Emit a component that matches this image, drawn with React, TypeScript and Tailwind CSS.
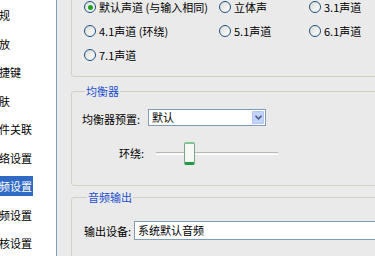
import React from 'react';

const font = { fontFamily: '"Noto Sans CJK SC", "Liberation Sans", sans-serif' };

const navItems = ['常规', '播放', '快捷键', '皮肤', '文件关联', '网络设置', '音频设置', '视频设置', '内核设置'];

const Radio = ({ label, checked = false }: { label: string; checked?: boolean }) => (
    <div className="flex items-center h-[24px] gap-[3px]">
        <span className="flex items-center justify-center w-[12px] h-[12px] rounded-full border border-[#1c5180] bg-gradient-to-br from-[#dcdcd6] to-white shrink-0">
            {checked && <span className="w-[5px] h-[5px] rounded-full bg-[#21a121]" />}
        </span>
        <span className="whitespace-nowrap">{label}</span>
    </div>
);

const GroupBox = ({ title, className, children }: { title: string; className?: string; children: React.ReactNode }) => (
    <fieldset className={`w-[340px] shrink-0 border border-[#d0d0c6] rounded-[3px] ${className ?? ''}`}>
        <legend className="ml-[3px] px-[1px] text-[#1f4fcf] leading-[13px]">{title}</legend>
        {children}
    </fieldset>
);

const App = () => {
    return (
        <div className="flex w-[375px] h-[256px] overflow-hidden bg-[#eaeaea] text-[11px] text-black" style={font}>
            {/* tree on the left, scrolled so the first character is hidden */}
            <div className="w-[57px] shrink-0 bg-white border-r border-[#7f9db9] overflow-hidden pt-[1px]">
                {navItems.map((item) => (
                    <div key={item} className="h-[28.5px] flex items-center">
                        <span
                            className={`ml-[-12px] pr-[1px] h-[20px] leading-[20px] whitespace-nowrap ${
                                item === '音频设置' ? 'bg-[#316ac5] text-white' : ''
                            }`}
                        >
                            {item}
                        </span>
                    </div>
                ))}
            </div>

            {/* settings panel */}
            <div className="flex-1 overflow-hidden pl-[14px] flex flex-col">
                {/* channels */}
                <div className="w-[340px] shrink-0 mt-[-14px] border border-[#d0d0c6] rounded-[3px] pt-[8px] pb-[9px] pl-[12px]">
                    <div className="grid grid-cols-[135px_90px_90px]">
                        <Radio label="默认声道 (与输入相同)" checked />
                        <Radio label="立体声" />
                        <Radio label="3.1声道" />
                        <Radio label="4.1声道 (环绕)" />
                        <Radio label="5.1声道" />
                        <Radio label="6.1声道" />
                        <Radio label="7.1声道" />
                    </div>
                </div>

                {/* equalizer */}
                <GroupBox title="均衡器" className="mt-[8px] pl-[10px] pb-[20px]">
                    <div className="flex items-center mt-[9px]">
                        <span className="pt-[4px] whitespace-nowrap">均衡器预置:</span>
                        <div className="ml-[8px] w-[118px] h-[17px] flex items-center bg-white border border-[#7f9db9]">
                            <span className="flex-1 pl-[3px] leading-[15px]">默认</span>
                            <span className="w-[12px] h-[13px] mr-[1px] flex items-center justify-center rounded-[1px] bg-[#c3d3fd] border border-[#b1c5f2]">
                                <svg width="7" height="5" viewBox="0 0 7 5">
                                    <path d="M0.5 0.8 L3.5 3.8 L6.5 0.8" stroke="#4d6185" strokeWidth="1.6" fill="none" />
                                </svg>
                            </span>
                        </div>
                    </div>
                    <div className="flex items-center mt-[14px]">
                        <span className="ml-[37px] whitespace-nowrap">环绕:</span>
                        <div className="relative ml-[12px] w-[122px] h-[23px]">
                            <div className="absolute left-0 right-0 top-[10px] h-[3px] bg-[#f4f4f4] border-t border-[#b8b8b0] border-b border-b-white" />
                            <div className="absolute left-[28px] top-0 w-[11px] h-[23px] rounded-[2px] bg-[#f7f7f4] border border-[#7da48a] border-b-[3px] border-b-[#1f9a45] border-t-[2px] border-t-[#7fc792]" />
                        </div>
                    </div>
                </GroupBox>

                {/* audio output */}
                <GroupBox title="音频输出" className="mt-[5px] pl-[12px] pb-[30px]">
                    <div className="flex items-center mt-[17px]">
                        <span className="pt-[2px] whitespace-nowrap">输出设备:</span>
                        <div className="ml-[3px] w-[280px] h-[19px] bg-white border border-[#7f9db9] pl-[3px] leading-[17px] whitespace-nowrap">
                            系统默认音频
                        </div>
                    </div>
                </GroupBox>
            </div>
        </div>
    );
};

export default App;
